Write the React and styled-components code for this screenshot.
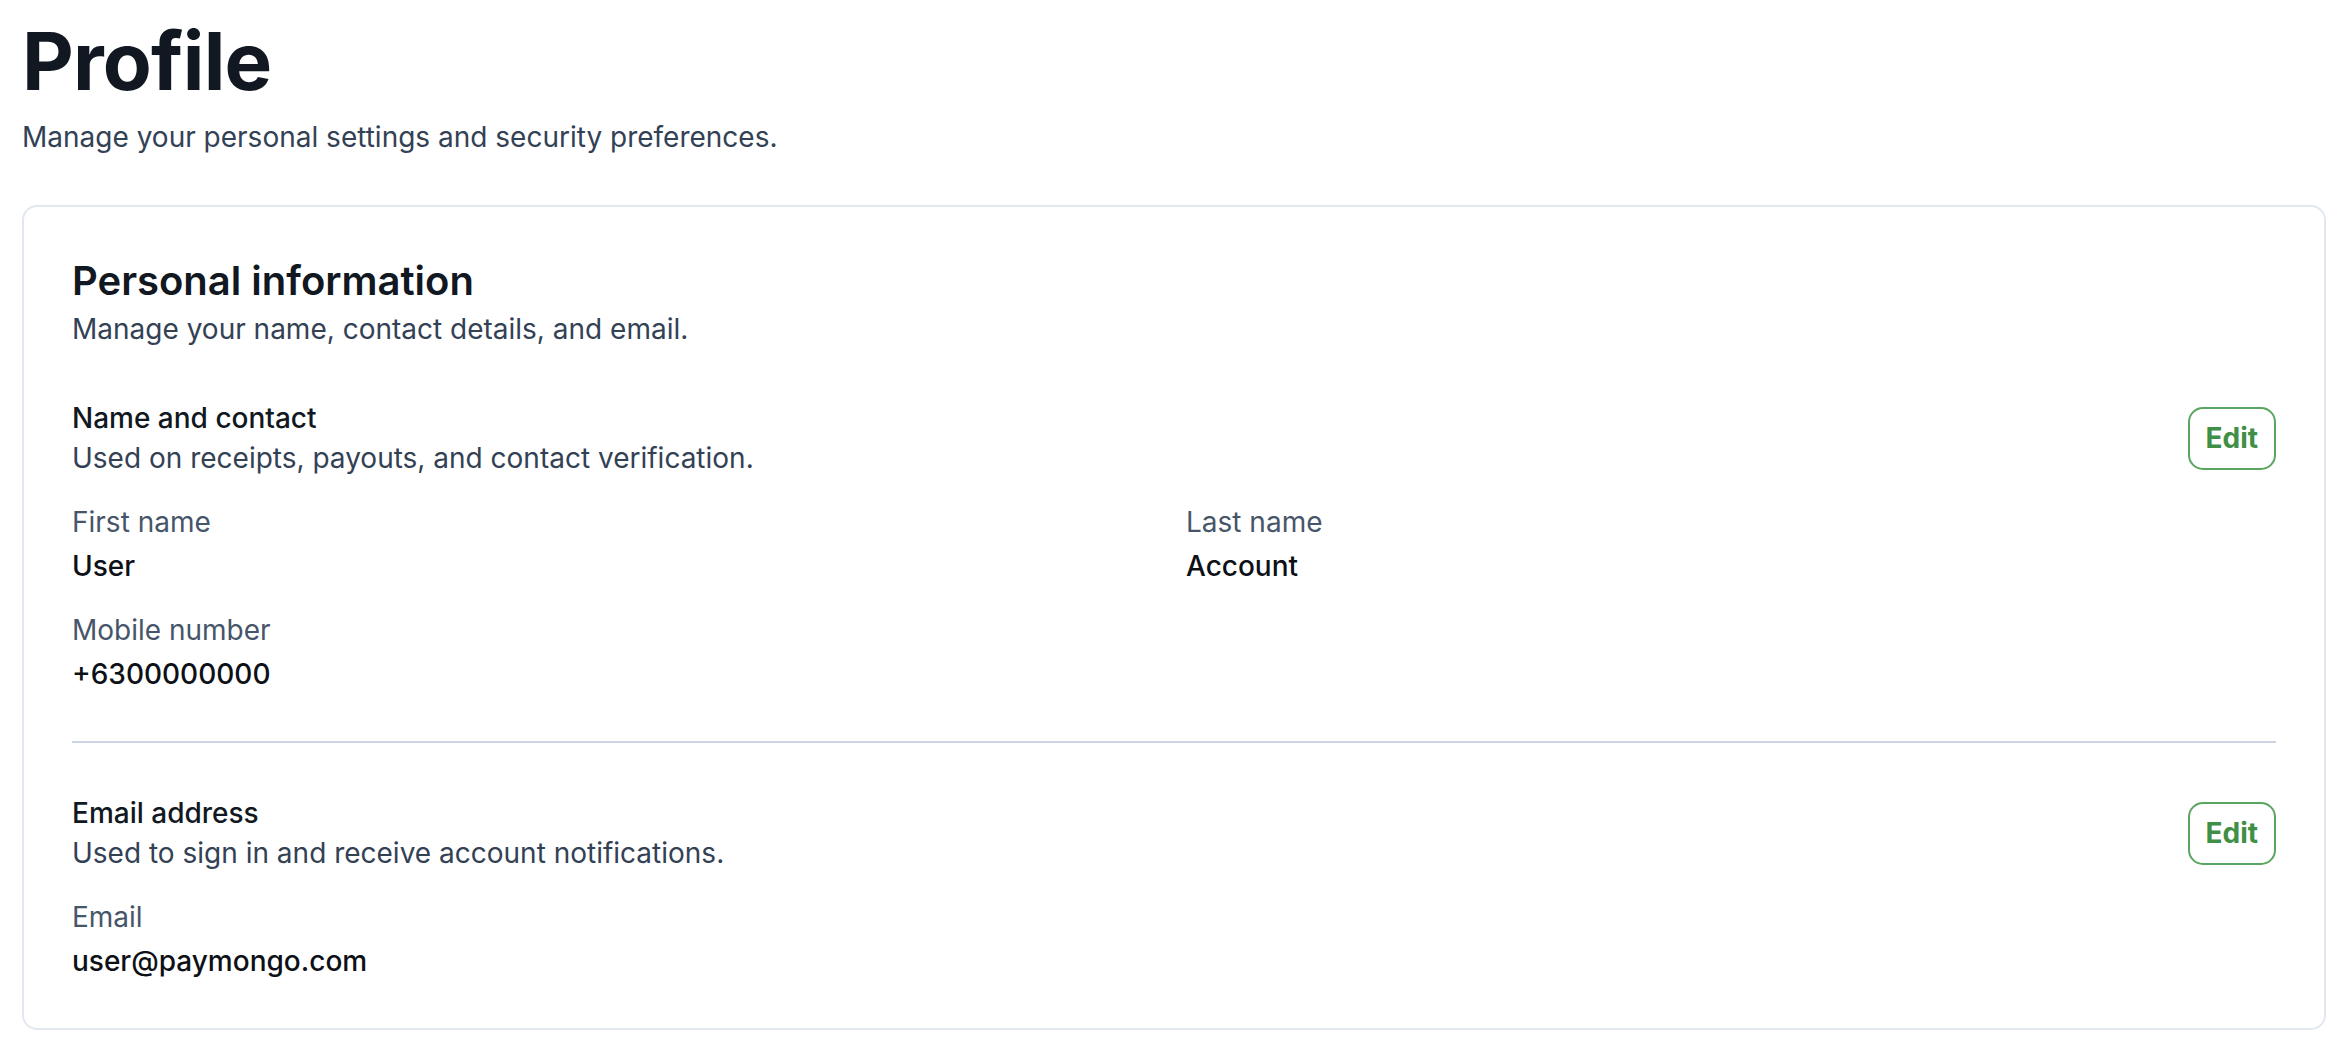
import React from 'react';
import styled, { createGlobalStyle } from 'styled-components';

const GlobalStyle = createGlobalStyle`
  html, body {
    margin: 0;
    padding: 0;
    background: #ffffff;
  }
  body {
    font-family: Inter, "Noto Sans", "Liberation Sans", sans-serif;
    -webkit-font-smoothing: antialiased;
  }
`;

const Page = styled.main`
  padding: 22px 24px 0 22px;
`;

const Title = styled.h1`
  margin: 0;
  font-size: 80px;
  line-height: 78px;
  font-weight: 700;
  letter-spacing: -0.01em;
  color: #111821;
`;

const Subtitle = styled.p`
  margin: 17px 0 0;
  font-size: 28px;
  line-height: 40px;
  color: #334155;
`;

const Card = styled.section`
  margin-top: 48px;
  border: 2px solid #e2e8f0;
  border-radius: 15px;
  padding: 48px 48px 47px;
  background: #fff;
`;

const CardTitle = styled.h2`
  margin: 0;
  font-size: 40px;
  line-height: 52px;
  font-weight: 600;
  color: #111821;
`;

const CardText = styled.p`
  margin: 3px 0 0;
  font-size: 28px;
  line-height: 39px;
  color: #334155;
`;

const Section = styled.div`
  padding-top: ${(p) => (p.$last ? '50px' : '49px')};
  padding-bottom: ${(p) => (p.$last ? '0' : '47px')};
  border-bottom: ${(p) => (p.$last ? 'none' : '2px solid #cbd5e1')};
`;

const SectionHead = styled.div`
  display: flex;
  align-items: center;
  justify-content: space-between;
`;

const SectionTitle = styled.div`
  font-size: 28px;
  line-height: 40px;
  font-weight: 500;
  color: #111821;
`;

const SectionText = styled.div`
  font-size: 28px;
  line-height: 40px;
  color: #334155;
`;

const EditButton = styled.button`
  font-family: inherit;
  font-size: 28px;
  line-height: 39px;
  font-weight: 700;
  color: #3f8f47;
  background: #fff;
  border: 2px solid #5aa55f;
  border-radius: 15px;
  padding: 10px 16px;
  cursor: pointer;
`;

const Fields = styled.dl`
  margin: 25px 0 0;
  display: grid;
  grid-template-columns: 1fr 1fr;
  column-gap: 24px;
  row-gap: 25px;
`;

const Field = styled.div`
  display: flex;
  flex-direction: column;
  gap: 5px;
`;

const Label = styled.dt`
  font-size: 28px;
  line-height: 39px;
  color: #475569;
`;

const Value = styled.dd`
  margin: 0;
  font-size: 28px;
  line-height: 39px;
  font-weight: 500;
  color: #0d1117;
`;

const InfoSection = ({ title, text, fields, last }) => (
  <Section $last={last}>
    <SectionHead>
      <div>
        <SectionTitle>{title}</SectionTitle>
        <SectionText>{text}</SectionText>
      </div>
      <EditButton type="button">Edit</EditButton>
    </SectionHead>
    <Fields>
      {fields.map((f) => (
        <Field key={f.label}>
          <Label>{f.label}</Label>
          <Value>{f.value}</Value>
        </Field>
      ))}
    </Fields>
  </Section>
);

export default function App() {
  return (
    <>
      <GlobalStyle />
      <Page>
        <Title>Profile</Title>
        <Subtitle>Manage your personal settings and security preferences.</Subtitle>
        <Card>
          <CardTitle>Personal information</CardTitle>
          <CardText>Manage your name, contact details, and email.</CardText>
          <InfoSection
            title="Name and contact"
            text="Used on receipts, payouts, and contact verification."
            fields={[
              { label: 'First name', value: 'User' },
              { label: 'Last name', value: 'Account' },
              { label: 'Mobile number', value: '+6300000000' },
            ]}
          />
          <InfoSection
            last
            title="Email address"
            text="Used to sign in and receive account notifications."
            fields={[{ label: 'Email', value: 'user@paymongo.com' }]}
          />
        </Card>
      </Page>
    </>
  );
}
